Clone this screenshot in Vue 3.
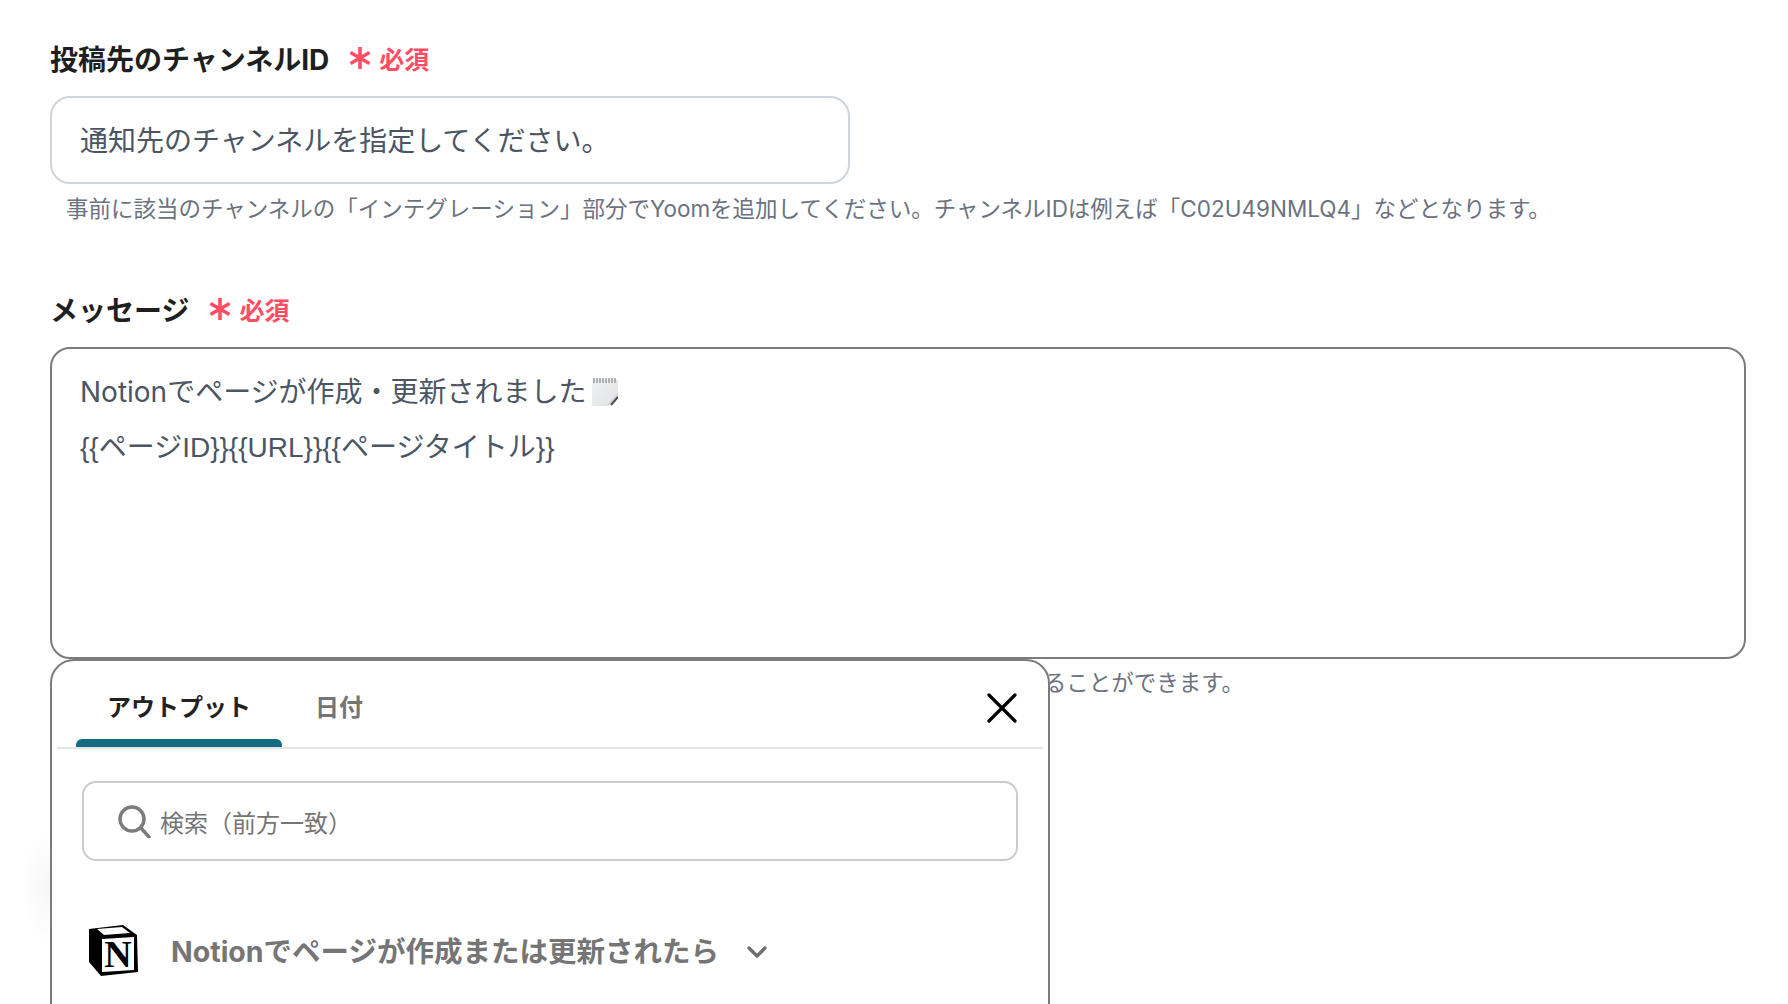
<script setup>
import { ref } from 'vue'

const activeTab = ref('output')
const tabs = [
  { id: 'output', label: 'アウトプット' },
  { id: 'date', label: '日付' }
]
const templateLine = '{{ページID}}{{URL}}{{ページタイトル}}'
</script>

<template>
  <div class="page">
    <section class="field first">
      <div class="label-row">
        <span class="label">投稿先のチャンネルID</span>
        <svg class="star" viewBox="0 0 24 24" width="24" height="24">
          <path d="M12 1v22M2.500 6.500l19 11M21.500 6.500l-19 11" stroke="#ff4d63" stroke-width="3.600" />
        </svg>
        <span class="req">必須</span>
      </div>
      <div class="input">通知先のチャンネルを指定してください。</div>
      <p class="hint">事前に該当のチャンネルの「インテグレーション」部分でYoomを追加してください。チャンネルIDは例えば「C02U49NMLQ4」などとなります。</p>
    </section>

    <section class="field second">
      <div class="label-row">
        <span class="label">メッセージ</span>
        <svg class="star" viewBox="0 0 24 24" width="24" height="24">
          <path d="M12 1v22M2.500 6.500l19 11M21.500 6.500l-19 11" stroke="#ff4d63" stroke-width="3.600" />
        </svg>
        <span class="req">必須</span>
      </div>
      <div class="textarea">
        <div class="line">Notionでページが作成・更新されました<svg class="memo" viewBox="0 0 26 28" width="26" height="28">
          <defs>
            <linearGradient id="memo-bg" x1="0" y1="0" x2="1" y2="1">
              <stop offset="0" stop-color="#f1f2f4" />
              <stop offset="1" stop-color="#dfe1e4" />
            </linearGradient>
          </defs>
          <rect x="0" y="2" width="26" height="26" fill="url(#memo-bg)" />
          <path d="M2 0v5M5 0v5M8 0v5M11 0v5M14 0v5M17 0v5M20 0v5M23 0v5" stroke="#85888d" stroke-width="1.200" />
          <path d="M26 15 L16 28 H26 Z" fill="#fff" />
          <path d="M26 14 C23 19 19 21 15 28 C20 27 24 23 26 19 Z" fill="#d3d5d8" />
          <path d="M26 19 L19 27" stroke="#4c4f53" stroke-width="2" />
        </svg></div>
        <div class="line vars">{{ templateLine }}</div>
      </div>
      <p class="hint msg-hint">入力欄をクリックすると前のステップで取得したアウトプットや日付を変数として本文に挿入することができます。</p>

      <div class="popup">
        <div class="tabs">
          <div
            v-for="t in tabs"
            :key="t.id"
            class="tab"
            :class="{ active: activeTab === t.id }"
            @click="activeTab = t.id"
          >{{ t.label }}</div>
          <svg class="close" viewBox="0 0 30 30" width="30" height="30">
            <path d="M2 2 L28 28 M28 2 L2 28" stroke="#000" stroke-width="3.200" stroke-linecap="round" />
          </svg>
        </div>
        <div class="search">
          <svg class="search-icon" viewBox="0 0 34 34" width="34" height="34">
            <circle cx="15" cy="15" r="12" fill="none" stroke="#7b7b7b" stroke-width="3.400" />
            <path d="M24 24 L32 33" stroke="#7b7b7b" stroke-width="3.400" stroke-linecap="round" />
          </svg>
          <span class="placeholder">検索（前方一致）</span>
        </div>
        <div class="group">
          <svg class="notion" viewBox="0 0 52 54" width="52" height="54">
            <path d="M2 6 L36 2 L50 12 L51 49 L14 53 L2 39 Z" fill="#000" />
            <path d="M10 6 L35 4 L43 10 L17 12 Z" fill="#fff" />
            <path d="M15 16 L47 14 L47 47 L15 49 Z" fill="#fff" />
            <text x="31" y="44" text-anchor="middle" class="notion-n">N</text>
          </svg>
          <span class="group-name">Notionでページが作成または更新されたら</span>
          <svg class="chev" viewBox="0 0 20 12" width="20" height="12">
            <path d="M2 2 L10 10 L18 2" fill="none" stroke="#6f6f6f" stroke-width="3.400" stroke-linecap="round" stroke-linejoin="round" />
          </svg>
        </div>
      </div>
    </section>
  </div>
</template>

<style>
html, body { margin: 0; background: #fff; overflow: hidden; }
</style>

<style scoped>
.page {
  height: 1004px;
  overflow: hidden;
  padding: 39px 42px 0 50px;
  box-sizing: border-box;
  font-family: Inter, "Noto Sans CJK JP", sans-serif;
}
.field { position: relative; }
.second { margin-top: 65px; }
.label-row { display: flex; align-items: center; height: 38px; }
.label { font-size: 28px; font-weight: 700; color: #1f1f1f; }
.star { flex: none; margin-left: 19px; }
.req { color: #ff4d63; font-size: 25px; font-weight: 700; margin-left: 7px; }
.input {
  width: 800px;
  height: 88px;
  box-sizing: border-box;
  margin-top: 19px;
  padding: 0 0 2px 28px;
  display: flex;
  align-items: center;
  border: 2px solid #cfd4db;
  border-radius: 20px;
  font-size: 28px;
  color: #4b5563;
}
.hint { margin: 9px 0 0 16px; font-size: 22.5px; line-height: 32px; color: #6b7280; }
.textarea {
  height: 312px;
  box-sizing: border-box;
  margin-top: 19px;
  padding: 15px 28px;
  border: 2px solid #7b7b7b;
  border-radius: 20px;
  font-size: 28px;
  color: #4b5563;
}
.line { height: 56px; line-height: 56px; display: flex; align-items: center; }
.vars { font-family: "Liberation Sans", "Noto Sans CJK JP", sans-serif; }
.memo { flex: none; margin-left: 5px; }
.msg-hint { margin: 8px 0 0 27px; }
.popup {
  position: absolute;
  left: 0;
  top: 369px;
  width: 1000px;
  height: 600px;
  box-sizing: border-box;
  background: #fff;
  border: 2px solid #7b7b7b;
  border-radius: 24px;
}
.popup::before {
  content: "";
  position: absolute;
  left: -32px;
  top: 165px;
  width: 30px;
  height: 120px;
  background: radial-gradient(ellipse at right, rgba(0, 0, 0, 0.035), rgba(0, 0, 0, 0) 70%);
}
.tabs {
  display: flex;
  align-items: flex-end;
  position: relative;
  height: 86px;
  margin: 0 5px;
  padding-left: 19px;
  border-bottom: 2px solid #e5e5e5;
}
.tab {
  position: relative;
  width: 206px;
  height: 86px;
  padding-top: 8px;
  line-height: 78px;
  text-align: center;
  font-size: 24px;
  font-weight: 700;
  color: #757575;
  cursor: pointer;
  box-sizing: border-box;
}
.tab + .tab { width: 114px; }
.tab.active { color: #222; }
.tab.active::after {
  content: "";
  position: absolute;
  left: 0;
  right: 0;
  bottom: 0;
  height: 8px;
  background: #146c82;
  border-radius: 6px 6px 0 0;
}
.close { position: absolute; right: 26px; top: 32px; }
.search {
  display: flex;
  align-items: center;
  height: 80px;
  box-sizing: border-box;
  margin: 32px 30px 0;
  padding-left: 33px;
  border: 2px solid #cccccc;
  border-radius: 14px;
}
.search-icon { flex: none; }
.placeholder { margin-left: 9px; font-size: 24px; color: #757575; }
.group { display: flex; align-items: center; margin: 62px 0 0 35px; }
.notion { flex: none; }
.notion-n { font-family: "Liberation Serif", serif; font-size: 38px; font-weight: 700; fill: #000; }
.group-name { margin: 0 0 2px 32px; font-size: 28.5px; font-weight: 700; color: #757575; }
.chev { flex: none; margin: 4px 0 0 28px; }
</style>
